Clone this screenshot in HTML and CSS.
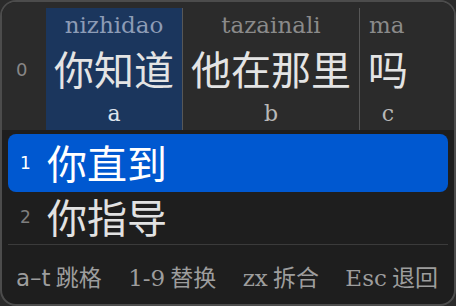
FILE: index.html
```html
<!DOCTYPE html>
<html lang="zh">
<head>
<meta charset="utf-8">
<link rel="stylesheet" href="styles.css">
</head>
<body>
<div class="panel">
  <div class="preedit">
    <div class="row-label">0</div>
    <div class="seg seg-active">
      <div class="pinyin">nizhidao</div>
      <div class="hanzi">你知道</div>
      <div class="key">a</div>
    </div>
    <div class="divider"></div>
    <div class="seg">
      <div class="pinyin">tazainali</div>
      <div class="hanzi">他在那里</div>
      <div class="key">b</div>
    </div>
    <div class="divider"></div>
    <div class="seg seg-left">
      <div class="pinyin">ma</div>
      <div class="hanzi">吗</div>
      <div class="key">c</div>
    </div>
  </div>
  <div class="cands">
    <div class="cand cand-active">
      <span class="cand-num">1</span>
      <span class="cand-text">你直到</span>
    </div>
    <div class="cand">
      <span class="cand-num">2</span>
      <span class="cand-text">你指导</span>
    </div>
    <div class="sep"></div>
    <div class="footer">
      <span class="hint"><span class="k k-sans">a–t</span> 跳格</span>
      <span class="hint"><span class="k">1-9</span> 替换</span>
      <span class="hint"><span class="k">zx</span> 拆合</span>
      <span class="hint"><span class="k">Esc</span> 退回</span>
    </div>
  </div>
</div>
</body>
</html>
```

FILE: styles.css
```css
html, body {
  margin: 0;
  padding: 0;
  background: #2b2b2b;
}
body {
  width: 456px;
  height: 306px;
  overflow: hidden;
}
.panel {
  box-sizing: border-box;
  width: 456px;
  height: 306px;
  border: 2px solid #4c4c4c;
  border-radius: 16px;
  overflow: hidden;
  background: #1e1e1e;
  display: flex;
  flex-direction: column;
  font-family: "DejaVu Serif", "Noto Sans CJK SC", serif;
}
.preedit {
  background: #2b2b2b;
  height: 128px;
  padding-top: 6px;
  box-sizing: border-box;
  display: flex;
  flex-shrink: 0;
}
.row-label {
  width: 44px;
  box-sizing: border-box;
  padding-left: 14px;
  font-family: "DejaVu Sans", sans-serif;
  font-size: 18px;
  color: #878787;
  line-height: 20px;
  padding-top: 52px;
}
.seg {
  display: flex;
  flex-direction: column;
  align-items: center;
  padding: 4px 8px 0;
  height: 122px;
  box-sizing: border-box;
  overflow: hidden;
}
.seg-left {
  align-items: flex-start;
}
.seg-active {
  background: #1b365d;
}
.divider {
  width: 1px;
  height: 122px;
  background: #575757;
}
.pinyin {
  font-size: 23px;
  line-height: 27px;
  color: #8a8a8a;
  white-space: nowrap;
}
.seg-active .pinyin {
  color: #8d9cb6;
}
.seg-left .pinyin {
  padding-left: 1px;
}
.hanzi {
  font-family: "Noto Sans CJK SC", sans-serif;
  font-size: 40px;
  line-height: 58px;
  color: #e4e4e4;
  white-space: nowrap;
}
.key {
  font-size: 22px;
  line-height: 33px;
  color: #b8b8b8;
}
.seg-left .key {
  align-self: center;
}
.seg-active .key {
  color: #dde3ec;
}
.cands {
  padding: 4px 6px 0;
  display: flex;
  flex-direction: column;
  flex: 1;
}
.cand {
  display: flex;
  align-items: center;
  height: 50px;
  border-radius: 8px;
}
.cand-active {
  height: 58px;
  background: #0058d0;
}
.cand-num {
  width: 39px;
  box-sizing: border-box;
  padding-left: 12px;
  font-family: "DejaVu Sans", sans-serif;
  font-size: 17px;
  color: #7e7e7e;
}
.cand-active .cand-num {
  color: #ffffff;
}
.cand-text {
  font-family: "Noto Sans CJK SC", sans-serif;
  font-size: 40px;
  line-height: 40px;
  color: #e2e2e2;
  margin-top: -3px;
}
.cand-active .cand-text {
  color: #ffffff;
}
.sep {
  height: 1px;
  background: #3b3b3b;
  margin-top: 2px;
}
.footer {
  display: flex;
  justify-content: space-between;
  align-items: center;
  flex: 1;
  padding: 2px 10px 0 8px;
  font-size: 23px;
  color: #9d9d9d;
}
.hint {
  font-family: "Noto Sans CJK SC", sans-serif;
  white-space: nowrap;
}
.k {
  font-family: "DejaVu Serif", serif;
}
.k-sans {
  font-family: "DejaVu Sans", sans-serif;
}
```
